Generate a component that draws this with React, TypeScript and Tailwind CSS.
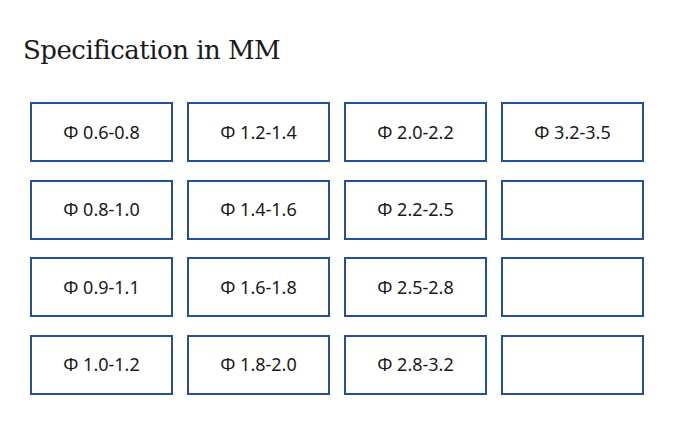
const specs: (string | null)[][] = [
  ["0.6-0.8", "1.2-1.4", "2.0-2.2", "3.2-3.5"],
  ["0.8-1.0", "1.4-1.6", "2.2-2.5", null],
  ["0.9-1.1", "1.6-1.8", "2.5-2.8", null],
  ["1.0-1.2", "1.8-2.0", "2.8-3.2", null],
]

export default function App() {
  return (
    <div className="w-[700px] h-[444px] bg-white overflow-hidden">
      <h1 className="pl-[23px] pt-[34px] text-[26px] leading-[32px] text-[#1a1a1a] font-['DejaVu_Serif',serif] tracking-[-0.5px]">
        Specification in MM
      </h1>
      <div className="mt-[36px] ml-[30px] grid grid-cols-[repeat(4,143px)] gap-x-[14px] gap-y-[17.5px]">
        {specs.map((row, r) =>
          row.map((s, c) => (
            <div
              key={`${r}-${c}`}
              className="h-[60px] border-2 border-[#24509a] flex items-center justify-center text-[18px] text-[#1a1a1a] font-['Noto_Sans',sans-serif]"
            >
              {s ? `Φ ${s}` : ""}
            </div>
          ))
        )}
      </div>
    </div>
  )
}
